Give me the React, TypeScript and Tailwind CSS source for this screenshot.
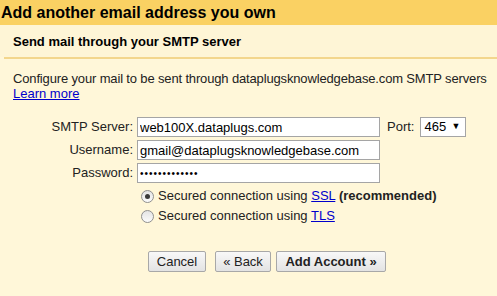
import React from 'react';

const Radio = ({ checked }: { checked?: boolean }) => (
    <span className="w-[13px] h-[13px] rounded-full border border-[#8f8f8f] bg-gradient-to-b from-[#e4e4e4] to-[#fbfbfb] flex items-center justify-center shrink-0">
        {checked && <span className="w-[5px] h-[5px] rounded-full bg-[#3a3a3a]"></span>}
    </span>
);

const Field = ({ label, value, type = 'text' }: { label: string; value: string; type?: string }) => (
    <>
        <label className="text-right pr-[4px] leading-[20px]">{label}</label>
        <input
            type={type}
            readOnly
            value={value}
            className={`h-[20px] w-[243px] border border-[#a5a5a5] bg-white px-[2px] text-black outline-none ${type === 'password' ? 'text-[10px] tracking-[1px]' : 'text-[13px]'}`}
        />
    </>
);

const App = () => {
    return (
        <div
            className="w-[497px] h-[296px] overflow-hidden bg-[#fff7d9] text-[#222] text-[13px]"
            style={{ fontFamily: '"Liberation Sans", Arial, sans-serif' }}
        >
            <div className="h-[25px] bg-[#fad163] pl-[1px] pt-[2px] text-[16px] font-bold leading-[22px] text-black">
                Add another email address you own
            </div>
            <div className="h-[32px] bg-[#fef5d6] pl-[13px] pt-[9px] font-bold leading-[15px] text-black">
                Send mail through your SMTP server
            </div>
            <div className="ml-[4px] h-[2px] bg-[#f3d68c]"></div>

            <div className="pl-[13px] pt-[12px]">
                <p className="leading-[15px] whitespace-nowrap tracking-[-0.15px]">
                    Configure your mail to be sent through dataplugsknowledgebase.com SMTP servers
                    <br />
                    <a href="#" className="text-[#0000cc] underline tracking-normal">Learn more</a>
                </p>

                <div className="mt-[16px] grid grid-cols-[124px_243px_auto] gap-y-[3px] items-center">
                    <Field label="SMTP Server:" value="web100X.dataplugs.com" />
                    <div className="flex items-center pl-[7px] gap-[6px]">
                        <span className="leading-[20px]">Port:</span>
                        <div className="h-[20px] w-[46px] border border-[#a5a5a5] bg-white flex items-center justify-between pl-[3px] pr-[5px] text-black">
                            <span>465</span>
                            <span className="text-[9px]">▼</span>
                        </div>
                    </div>
                    <Field label="Username:" value="gmail@dataplugsknowledgebase.com" />
                    <div></div>
                    <Field label="Password:" value="xxxxxxxxxxxxx" type="password" />
                    <div></div>
                </div>

                <div className="mt-[3px] ml-[128px] flex flex-col">
                    <div className="flex items-center gap-[4px] h-[20px]">
                        <Radio checked />
                        <span>
                            Secured connection using <a href="#" className="text-[#0000cc] underline">SSL</a>{' '}
                            <b>(recommended)</b>
                        </span>
                    </div>
                    <div className="flex items-center gap-[4px] h-[20px]">
                        <Radio />
                        <span>
                            Secured connection using <a href="#" className="text-[#0000cc] underline">TLS</a>
                        </span>
                    </div>
                </div>

                <div className="mt-[25px] ml-[135px] flex">
                    <button className="h-[21px] w-[58px] border border-[#a8a8a8] rounded-[2px] bg-gradient-to-b from-[#f8f8f8] to-[#e3e3e3] text-[#222]">
                        Cancel
                    </button>
                    <button className="ml-[9px] h-[21px] w-[56px] border border-[#a8a8a8] rounded-[2px] bg-gradient-to-b from-[#f8f8f8] to-[#e3e3e3] text-[#222]">
                        « Back
                    </button>
                    <button className="ml-[5px] h-[21px] w-[110px] border border-[#a8a8a8] rounded-[2px] bg-gradient-to-b from-[#f8f8f8] to-[#e3e3e3] font-bold text-[#222]">
                        Add Account »
                    </button>
                </div>
            </div>
        </div>
    );
};

export default App;
